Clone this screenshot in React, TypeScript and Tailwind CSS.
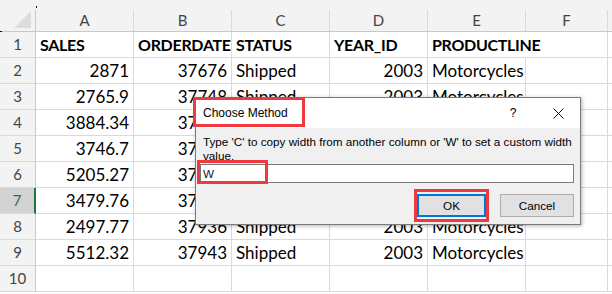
import React from "react";

type Row = { a: string; b: string; c: string; d: string; e: string; bold?: boolean };

const rows: Row[] = [
  { a: "SALES", b: "ORDERDATE", c: "STATUS", d: "YEAR_ID", e: "PRODUCTLINE", bold: true },
  { a: "2871", b: "37676", c: "Shipped", d: "2003", e: "Motorcycles" },
  { a: "2765.9", b: "37748", c: "Shipped", d: "2003", e: "Motorcycles" },
  { a: "3884.34", b: "37806", c: "Shipped", d: "2003", e: "Motorcycles" },
  { a: "3746.7", b: "37869", c: "Shipped", d: "2003", e: "Motorcycles" },
  { a: "5205.27", b: "37897", c: "Shipped", d: "2003", e: "Motorcycles" },
  { a: "3479.76", b: "37923", c: "Shipped", d: "2003", e: "Motorcycles" },
  { a: "2497.77", b: "37936", c: "Shipped", d: "2003", e: "Motorcycles" },
  { a: "5512.32", b: "37943", c: "Shipped", d: "2003", e: "Motorcycles" },
  { a: "", b: "", c: "", d: "", e: "" },
];

function DataCell({
  text,
  right,
  bold,
  narrow,
  spill,
}: {
  text: string;
  right?: boolean;
  bold?: boolean;
  narrow?: boolean;
  spill?: boolean;
}) {
  return (
    <div
      className={
        (narrow ? "w-[82px] " : "w-[98px] ") +
        "h-[26px] shrink-0 whitespace-nowrap border-r border-b border-[#dadada] px-[4px] leading-[26px] " +
        (spill ? "overflow-visible border-r-transparent relative z-10 " : "overflow-hidden ") +
        (right && !bold ? "text-right " : "text-left ") +
        (bold ? "font-bold text-[16px] tracking-[-0.3px]" : "")
      }
    >
      {text}
    </div>
  );
}

function isNum(s: string) {
  return /^[0-9.]+$/.test(s);
}

export default function App() {
  const letters = ["A", "B", "C", "D", "E", "F"];
  return (
    <div className="relative w-[612px] h-[294px] overflow-hidden bg-white font-['Lato','Liberation_Sans',sans-serif] text-[17px] text-black">
      <div className="h-[10px] bg-[#f3f3f3]" />
      <div className="flex h-[22px] bg-[#f3f3f3] border-b border-[#c8c8c8] text-[15px] text-[#444444]">
        <div className="w-[36px] shrink-0 border-r border-[#c8c8c8] flex items-end justify-end pr-[3px] pb-[3px]">
          <svg width="18" height="17" viewBox="0 0 18 17">
            <polygon points="17,0 17,17 0,17" fill="#dcdcdc" />
          </svg>
        </div>
        {letters.map((l, i) => (
          <div
            key={l}
            className={
              (i === 5 ? "w-[82px] " : "w-[98px] ") +
              "shrink-0 border-r border-[#dadada] flex items-center justify-center leading-none"
            }
          >
            {l}
          </div>
        ))}
        <div className="flex-1" />
      </div>
      {rows.map((r, i) => {
        const n = i + 1;
        const sel = n === 7;
        return (
          <div key={n} className="flex h-[26px]">
            <div
              className={
                "w-[36px] shrink-0 h-[26px] border-b border-[#dadada] flex items-center justify-center text-[15px] " +
                (sel
                  ? "bg-[#d2d2d2] text-[#217346] border-r-2 border-r-[#217346]"
                  : "bg-[#f3f3f3] text-[#444444] border-r border-r-[#c8c8c8]")
              }
            >
              {n}
            </div>
            <DataCell text={r.a} right={isNum(r.a)} bold={r.bold} />
            <DataCell text={r.b} right={isNum(r.b)} bold={r.bold} />
            <DataCell text={r.c} bold={r.bold} />
            <DataCell text={r.d} right={isNum(r.d)} bold={r.bold} />
            <DataCell text={r.e} bold={r.bold} spill={n === 1} />
            <DataCell text="" narrow />
            <div className="flex-1 h-[26px] border-b border-[#dadada]" />
          </div>
        );
      })}

      <div className="absolute left-[36px] top-[6px] w-[1px] h-[2px] bg-black" />
      <div className="absolute left-0 top-[31px] w-[2px] h-[1px] bg-black" />

      <div className="absolute z-20 left-[195px] top-[97px] w-[386px] h-[128px] border border-[#7a7a7a] bg-[#f0f0f0] shadow-[1px_1px_4px_rgba(0,0,0,0.3)] font-['Liberation_Sans',sans-serif] text-[11.7px] text-black">
        <div className="h-[30px] bg-white flex items-center pl-[7px] pr-[12px]">
          <span className="text-[12px]">Choose Method</span>
          <span className="ml-auto w-[20px] text-center text-[12px]">?</span>
          <span className="ml-[25px] w-[20px] flex items-center justify-center">
            <svg width="11" height="11" viewBox="0 0 11 11">
              <path d="M0.5 0.5 L10.5 10.5 M10.5 0.5 L0.5 10.5" stroke="#111" strokeWidth="1" fill="none" />
            </svg>
          </span>
        </div>
        <div className="pt-[7px] pl-[7px] pr-[2px] leading-[14px]">
          Type 'C' to copy width from another column or 'W' to set a custom width value.
        </div>
        <div className="ml-[4px] mt-[1px] w-[374px] h-[19px] border border-[#7a7a7a] bg-white pl-[2px] leading-[17px] text-[#0a1a3a]">
          W
        </div>
        <div className="mt-[11px] flex justify-end pr-[6px] gap-[14px]">
          <div className="w-[69px] h-[23px] border-2 border-[#0078d7] bg-[#e1e1e1] flex items-center justify-center">
            OK
          </div>
          <div className="w-[74px] h-[23px] border border-[#adadad] bg-[#e1e1e1] flex items-center justify-center">
            Cancel
          </div>
        </div>

        <div className="absolute left-[-3px] top-[-1px] w-[112px] h-[30px] border-[3px] border-[#ee3a3f]" />
        <div className="absolute left-[1px] top-[62px] w-[71px] h-[24px] border-[3px] border-[#ee3a3f]" />
        <div className="absolute left-[218px] top-[91px] w-[75px] h-[33px] border-[3px] border-[#ee3a3f]" />
      </div>
    </div>
  );
}
